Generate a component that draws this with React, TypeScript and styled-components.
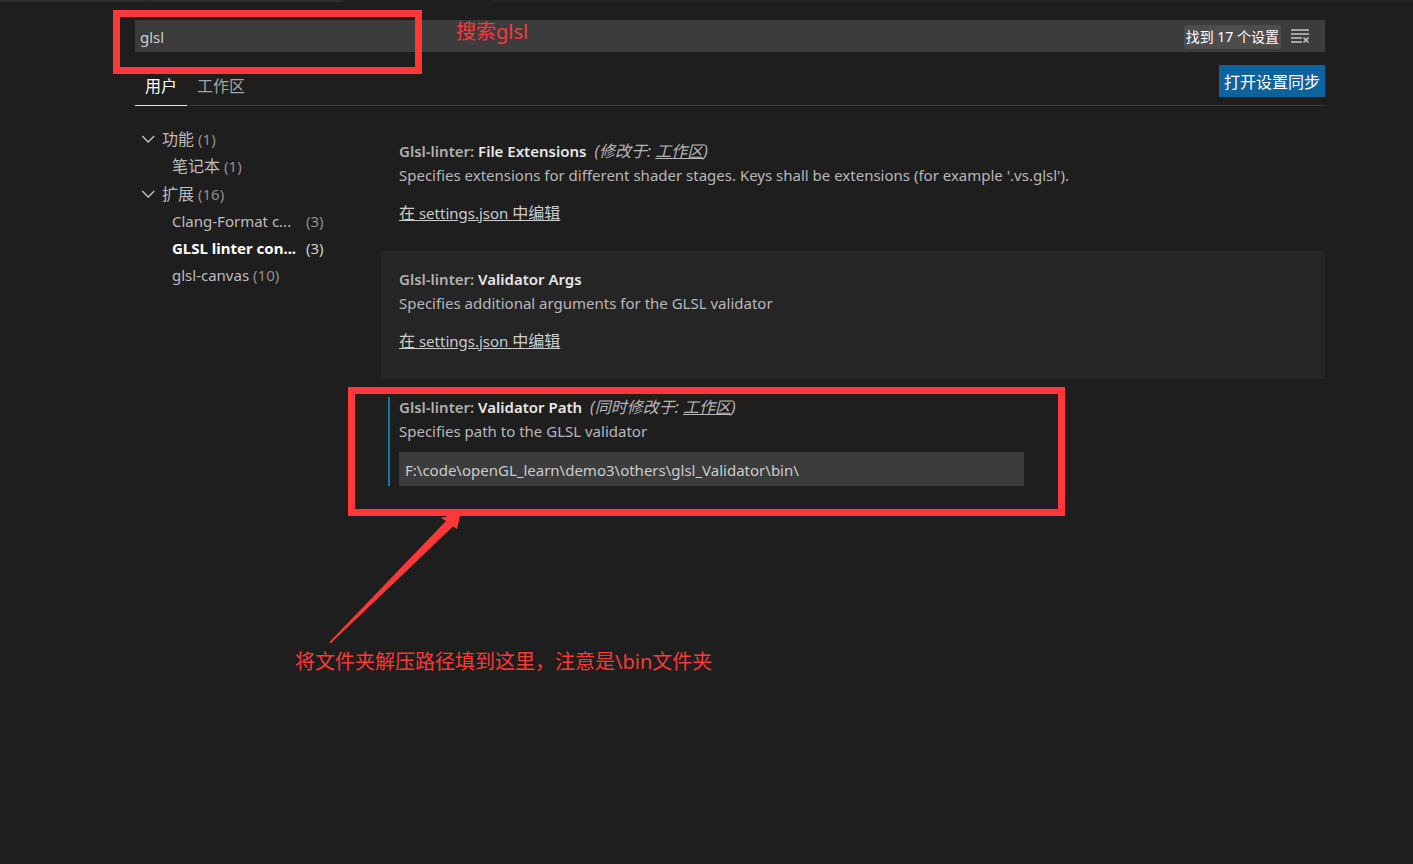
import React from 'react';
import styled, { createGlobalStyle, css } from 'styled-components';

const red = '#fc3838';

const GlobalStyle = createGlobalStyle`
  *, *::before, *::after { box-sizing: border-box; }
  html, body { margin: 0; background: #1e1e1e; }
  body {
    color: #cccccc;
    font-family: 'Noto Sans', 'Noto Sans CJK SC', sans-serif;
    font-size: 15px;
    line-height: 24px;
    overflow-x: hidden;
  }
  input, button { font: inherit; color: inherit; border: 0; outline: 0; border-radius: 0; }
`;

const Page = styled.div`
  min-height: 100vh;
`;

const TabStrip = styled.div`
  display: flex;
  height: 2px;
  background: #252526;
`;

const EditorTab = styled.div<{ $width: number; $active?: boolean }>`
  width: ${p => p.$width}px;
  background: ${p => (p.$active ? '#1e1e1e' : '#2d2d2d')};
  border-right: 1px solid #252526;
`;

const Editor = styled.main`
  padding: 18px 88px 0 135px;
`;

const SearchBar = styled.div`
  position: relative;
  display: flex;
  align-items: center;
  height: 32px;
  padding-right: 15px;
  background: #3c3c3c;
`;

const SearchInput = styled.input`
  flex: 1;
  min-width: 0;
  height: 32px;
  padding: 2px 5px 0;
  background: transparent;
`;

const CountBadge = styled.span`
  margin-top: 2px;
  padding: 0 2px;
  border-radius: 3px;
  background: #4d4d4d;
  color: #ffffff;
  font-size: 14px;
  white-space: nowrap;
`;

const IconButton = styled.button`
  display: flex;
  margin-left: 10px;
  padding: 0;
  background: none;
`;

const Header = styled.div`
  display: flex;
  justify-content: space-between;
  align-items: flex-start;
  height: 41px;
  margin-top: 13px;
  border-bottom: 1px solid #3a3a3a;
`;

const Tabs = styled.div`
  display: flex;
`;

const ScopeTab = styled.button<{ $active?: boolean }>`
  height: 41px;
  padding: 2px 10px 0;
  background: none;
  border-bottom: 1px solid ${p => (p.$active ? '#e7e7e7' : 'transparent')};
  color: ${p => (p.$active ? '#ffffff' : '#a5a5a5')};
  font-size: 16px;
`;

const SyncButton = styled.button`
  height: 32px;
  padding: 2px 5px 0;
  background: #0e639c;
  color: #ffffff;
  font-size: 16px;
  white-space: nowrap;
`;

const Body = styled.div`
  display: flex;
  padding-top: 17px;
`;

const Toc = styled.nav`
  flex: 0 0 246px;
  padding-top: 2px;
`;

const TocGroup = styled.div`
  margin-bottom: 1px;
`;

const TocRow = styled.a<{ $child?: boolean; $selected?: boolean }>`
  display: flex;
  align-items: center;
  gap: 4px;
  height: 27px;
  padding-left: ${p => (p.$child ? 37 : 6)}px;
  color: ${p => (p.$selected ? '#ffffff' : '#bdbdbd')};
  text-decoration: none;
  white-space: nowrap;
`;

const TocLabel = styled.span<{ $long?: boolean; $cjk?: boolean; $bold?: boolean }>`
  font-size: ${p => (p.$cjk ? 16 : 15)}px;
  font-weight: ${p => (p.$bold ? 700 : 400)};
  ${p => p.$long && css`min-width: 130px;`}
`;

const TocCount = styled.span<{ $selected?: boolean }>`
  color: ${p => (p.$selected ? '#cfcfcf' : '#909090')};
`;

const Chevron = styled.svg`
  width: 14px;
  height: 14px;
  margin-right: 3px;
`;

const Settings = styled.div`
  flex: 1;
  min-width: 0;
`;

const Setting = styled.section<{ $focused?: boolean }>`
  position: relative;
  height: 128px;
  padding: 16px 18px 0;
  background: ${p => (p.$focused ? '#252526' : 'transparent')};
`;

const Title = styled.h3`
  height: 24px;
  margin: 0;
  font-size: 15px;
  font-weight: 600;
  color: #b0b0b0;
`;

const Name = styled.span`
  color: #e7e7e7;
`;

const Scope = styled.em`
  margin-left: 8px;
  font-size: 16px;
  font-weight: 400;
  color: #b5b5b5;
`;

const Link = styled.a`
  color: inherit;
  text-decoration: underline;
`;

const Description = styled.p`
  margin: 0;
  color: #b8b8b8;
`;

const EditLink = styled(Link)`
  display: inline-block;
  margin-top: 14px;
  color: #cccccc;
`;

const Han = styled.span`
  font-size: 16px;
`;

const ModifiedBar = styled.div`
  position: absolute;
  left: 7px;
  top: 18px;
  width: 2px;
  height: 89px;
  background: #0c7d9d;
`;

const PathInput = styled.input`
  display: block;
  width: 100%;
  max-width: 625px;
  height: 34px;
  margin-top: 9px;
  padding: 2px 6px 0;
  background: #3c3c3c;
`;

const markBox = css`
  position: absolute;
  border: 7px solid ${red};
  pointer-events: none;
`;

const SearchMark = styled.div`
  ${markBox}
  left: -22px;
  top: -10px;
  width: 309px;
  height: 64px;
`;

const PathMark = styled.div`
  ${markBox}
  left: -33px;
  top: 8px;
  width: 717px;
  height: 129px;
`;

const Note = styled.div<{ $left: number; $top: number }>`
  position: absolute;
  left: ${p => p.$left}px;
  top: ${p => p.$top}px;
  color: ${red};
  font-size: 20px;
  line-height: 24px;
  white-space: nowrap;
`;

const Arrow = styled.svg`
  position: absolute;
  left: -53px;
  top: 133px;
  width: 140px;
  height: 134px;
`;

interface TocItem {
  label: string;
  count: number;
  cjk?: boolean;
  long?: boolean;
  selected?: boolean;
}

const toc: { label: string; count: number; items: TocItem[] }[] = [
  { label: '功能', count: 1, items: [{ label: '笔记本', count: 1, cjk: true }] },
  {
    label: '扩展',
    count: 16,
    items: [
      { label: 'Clang-Format c...', count: 3, long: true },
      { label: 'GLSL linter con...', count: 3, long: true, selected: true },
      { label: 'glsl-canvas', count: 10 },
    ],
  },
];

const EditInJson = () => (
  <EditLink href="#">
    <Han>在</Han> settings.json <Han>中编辑</Han>
  </EditLink>
);

export default function App() {
  return (
    <>
      <GlobalStyle />
      <Page>
        <TabStrip>
          <EditorTab $width={148} />
          <EditorTab $width={196} />
          <EditorTab $width={150} $active />
        </TabStrip>
        <Editor>
          <SearchBar>
            <SearchInput aria-label="搜索设置" defaultValue="glsl" spellCheck={false} />
            <CountBadge>找到 17 个设置</CountBadge>
            <IconButton aria-label="清除设置搜索输入">
              <svg width="19" height="16" viewBox="0 0 19 16" fill="none" stroke="#c5c5c5">
                <path d="M0 2h18M0 6h18M0 10h11M0 14h11" strokeWidth="1.5" />
                <path d="M12.500 9.500l5 5M17.500 9.500l-5 5" strokeWidth="1.600" />
              </svg>
            </IconButton>
            <SearchMark />
            <Note $left={321} $top={0}>搜索glsl</Note>
          </SearchBar>
          <Header>
            <Tabs>
              <ScopeTab $active>用户</ScopeTab>
              <ScopeTab>工作区</ScopeTab>
            </Tabs>
            <SyncButton>打开设置同步</SyncButton>
          </Header>
          <Body>
            <Toc>
              {toc.map(group => (
                <TocGroup key={group.label}>
                  <TocRow href="#">
                    <Chevron viewBox="0 0 14 14" fill="none" stroke="#c5c5c5" strokeWidth="1.3">
                      <path d="M1.2 4l6 6 6-6" />
                    </Chevron>
                    <TocLabel $cjk>{group.label}</TocLabel>
                    <TocCount>({group.count})</TocCount>
                  </TocRow>
                  {group.items.map(item => (
                    <TocRow href="#" key={item.label} $child $selected={item.selected}>
                      <TocLabel $cjk={item.cjk} $long={item.long} $bold={item.selected}>{item.label}</TocLabel>
                      <TocCount $selected={item.selected}>({item.count})</TocCount>
                    </TocRow>
                  ))}
                </TocGroup>
              ))}
            </Toc>
            <Settings>
              <Setting>
                <Title>
                  Glsl-linter: <Name>File Extensions</Name>
                  <Scope>(修改于: <Link href="#">工作区</Link>)</Scope>
                </Title>
                <Description>
                  Specifies extensions for different shader stages. Keys shall be extensions (for example '.vs.glsl').
                </Description>
                <EditInJson />
              </Setting>
              <Setting $focused>
                <Title>
                  Glsl-linter: <Name>Validator Args</Name>
                </Title>
                <Description>Specifies additional arguments for the GLSL validator</Description>
                <EditInJson />
              </Setting>
              <Setting>
                <ModifiedBar />
                <Title>
                  Glsl-linter: <Name>Validator Path</Name>
                  <Scope>(同时修改于: <Link href="#">工作区</Link>)</Scope>
                </Title>
                <Description>Specifies path to the GLSL validator</Description>
                <PathInput
                  aria-label="Validator Path"
                  defaultValue={'F:\\code\\openGL_learn\\demo3\\others\\glsl_Validator\\bin\\'}
                  spellCheck={false}
                />
                <PathMark />
                <Arrow viewBox="0 0 140 134" fill={red}>
                  <path d="M1.5 130L118 9l-5-3L133 0l-4 17-4-2.500L2.500 131.500z" />
                </Arrow>
                <Note $left={-86} $top={271}>将文件夹解压路径填到这里，注意是\bin文件夹</Note>
              </Setting>
            </Settings>
          </Body>
        </Editor>
      </Page>
    </>
  );
}
